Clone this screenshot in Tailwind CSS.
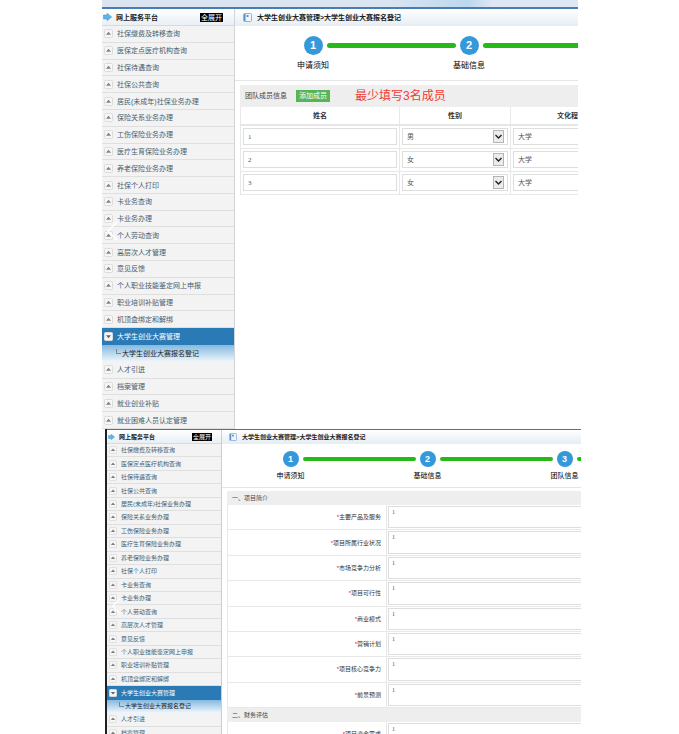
<!DOCTYPE html>
<html lang="zh-CN">
<head>
    <meta charset="UTF-8">
    <meta name="viewport" content="width=device-width, initial-scale=1.0">
    <title>网上服务平台</title>
    <script src="https://cdn.jsdelivr.net/npm/@tailwindcss/browser@4"></script>
</head>
<body class="bg-white h-screen overflow-hidden font-['Liberation_Sans','Noto_Sans_CJK_SC',sans-serif] text-[#333]">

    <!-- Team members -->
    <section class="ml-[102px] mr-[101px] overflow-hidden">
        <div class="h-[7px] bg-linear-to-r from-[#dbe5f2] from-60% via-[#bcd8ee] via-77% to-[#dfe6f4] to-82%"></div>
        <div class="flex border-t-2 border-[#4a7db3]">
            <aside class="relative w-[133px] shrink-0 border-r border-[#d0d5d9] bg-[#f3f3f3]">
                <header class="flex items-center h-[17px] pl-px pr-[11px] bg-linear-to-b from-white to-[#e9eff4] border-b border-[#d5dbe0]">
                    <svg class="w-[9px] h-[8px] mr-1" viewBox="0 0 9 8"><path d="M0.5 2H4V0.3L8.7 4L4 7.700V6H0.500Z" fill="#5bb5e6" stroke="#3c93cc" stroke-width=".5"/></svg>
                    <h2 class="text-[7px] leading-none font-bold text-[#222]">网上服务平台</h2>
                    <button type="button" class="ml-auto h-[9px] px-px bg-black text-white text-[7px] leading-[9px]">全展开</button>
                </header>
                <nav id="menuTeam" class="grid auto-rows-fr min-h-[403px]"></nav>
                <svg class="absolute left-[4px] top-[212px] w-[12px] h-[20px]" viewBox="0 0 12 20" fill="none" stroke="#fff" stroke-width="1.6"><path d="M11 1L2 10L11 19"/></svg>
            </aside>

            <main class="flex-1 min-w-0">
                <header class="flex items-center h-[17px] pl-[8px] bg-linear-to-b from-white to-[#e6edf3]">
                    <svg class="w-[9px] h-[9px] mr-[5px]" viewBox="0 0 9 9"><rect x=".5" y=".5" width="8" height="8" rx="1" fill="#eef5fc" stroke="#8fb3da"/><path d="M1 1H2.500V8H1ZM3.500 2H5.500V4H3.500Z" fill="#5b90cc"/></svg>
                    <h1 class="text-[7px] leading-none font-bold text-[#222] whitespace-nowrap">大学生创业大赛管理&gt;大学生创业大赛报名登记</h1>
                </header>
                <ol class="flex h-[55px] pt-[10px] overflow-hidden border-b border-[#e5e5e5]">
                    <li class="w-[156px] shrink-0">
                        <div class="flex items-center gap-1">
                            <i class="flex-1 h-[5px]"></i>
                            <span class="size-[19px] rounded-full bg-[#3498db] text-white text-[11px] leading-[19px] font-bold text-center">1</span>
                            <i class="flex-1 h-[5px] rounded-l-full bg-[#27b918]"></i>
                        </div>
                        <p class="mt-[6px] text-[8px] leading-[10px] text-center text-black">申请须知</p>
                    </li>
                    <li class="w-[156px] shrink-0">
                        <div class="flex items-center gap-1">
                            <i class="flex-1 h-[5px] rounded-r-full bg-[#27b918]"></i>
                            <span class="size-[19px] rounded-full bg-[#3498db] text-white text-[11px] leading-[19px] font-bold text-center">2</span>
                            <i class="flex-1 h-[5px] rounded-l-full bg-[#27b918]"></i>
                        </div>
                        <p class="mt-[6px] text-[8px] leading-[10px] text-center text-black">基础信息</p>
                    </li>
                    <li class="flex-1 h-[19px] flex items-center">
                        <i class="flex-1 h-[5px] bg-[#27b918]"></i>
                    </li>
                </ol>

                <div class="ml-[5px] mt-1 overflow-hidden">
                    <div class="flex items-center h-[22px] pl-[5px] bg-[#eee]">
                        <h3 class="text-[7px] text-[#444]">团队成员信息</h3>
                        <button type="button" class="ml-[9px] h-[12px] px-[3px] bg-[#56b558] text-white text-[7px] leading-[12px]">添加成员</button>
                        <p class="ml-[25px] text-[12px] leading-none text-[#f23a30]">最少填写3名成员</p>
                    </div>
                    <table class="w-[392px] table-fixed border-collapse text-[7px] leading-none">
                        <thead>
                            <tr class="h-[18px] border-b-2 border-[#e6e6e6]">
                                <th class="w-[159px] border-x border-[#e8e8e8]">姓名</th>
                                <th class="w-[111px] border-x border-[#e8e8e8]">性别</th>
                                <th class="border-x border-[#e8e8e8]">文化程度</th>
                            </tr>
                        </thead>
                        <tbody id="members"></tbody>
                    </table>
                </div>
            </main>
        </div>
    </section>

    <!-- Project form -->
    <section class="ml-[105px] mr-[98px] border-l-2 border-[#1d2126] overflow-hidden">
        <div class="flex border-t border-t-[#3f76ad]">
            <aside class="relative w-[115px] shrink-0 border-r border-[#c9ced3] bg-[#f3f3f3]">
                <header class="flex items-center h-[14px] pl-px pr-[9px] bg-linear-to-b from-white to-[#e9eff4] border-b border-[#d5dbe0]">
                    <svg class="w-[7px] h-[6px] mr-1" viewBox="0 0 9 8"><path d="M0.5 2H4V0.3L8.7 4L4 7.700V6H0.500Z" fill="#5bb5e6" stroke="#3c93cc" stroke-width=".5"/></svg>
                    <h2 class="text-[6px] leading-none font-bold text-[#222]">网上服务平台</h2>
                    <button type="button" class="ml-auto h-[8px] px-px bg-black text-white text-[6px] leading-[8px]">全展开</button>
                </header>
                <nav id="menuProject" class="grid auto-rows-fr min-h-[296px]"></nav>
                <svg class="absolute left-[4px] top-[167px] w-[10px] h-[18px]" viewBox="0 0 12 20" fill="none" stroke="#fff" stroke-width="1.6"><path d="M11 1L2 10L11 19"/></svg>
            </aside>

            <main class="flex-1 min-w-0">
                <header class="flex items-center h-[14px] pl-[7px] bg-linear-to-b from-white to-[#e6edf3]">
                    <svg class="w-[8px] h-[8px] mr-[5px]" viewBox="0 0 9 9"><rect x=".5" y=".5" width="8" height="8" rx="1" fill="#eef5fc" stroke="#8fb3da"/><path d="M1 1H2.500V8H1ZM3.500 2H5.500V4H3.500Z" fill="#5b90cc"/></svg>
                    <h1 class="text-[6px] leading-none font-bold text-[#222] whitespace-nowrap">大学生创业大赛管理&gt;大学生创业大赛报名登记</h1>
                </header>
                <ol class="flex h-[44px] pt-[7px] overflow-hidden border-b border-[#e5e5e5]">
                    <li class="w-[137px] shrink-0">
                        <div class="flex items-center gap-1">
                            <i class="flex-1 h-[4px]"></i>
                            <span class="size-[16px] rounded-full bg-[#3498db] text-white text-[9px] leading-[16px] font-bold text-center">1</span>
                            <i class="flex-1 h-[4px] rounded-l-full bg-[#27b918]"></i>
                        </div>
                        <p class="mt-[4px] text-[7px] leading-[9px] text-center text-black">申请须知</p>
                    </li>
                    <li class="w-[137px] shrink-0">
                        <div class="flex items-center gap-1">
                            <i class="flex-1 h-[4px] rounded-r-full bg-[#27b918]"></i>
                            <span class="size-[16px] rounded-full bg-[#3498db] text-white text-[9px] leading-[16px] font-bold text-center">2</span>
                            <i class="flex-1 h-[4px] rounded-l-full bg-[#27b918]"></i>
                        </div>
                        <p class="mt-[4px] text-[7px] leading-[9px] text-center text-black">基础信息</p>
                    </li>
                    <li class="w-[137px] shrink-0">
                        <div class="flex items-center gap-1">
                            <i class="flex-1 h-[4px] rounded-r-full bg-[#27b918]"></i>
                            <span class="size-[16px] rounded-full bg-[#3498db] text-white text-[9px] leading-[16px] font-bold text-center">3</span>
                            <i class="flex-1 h-[4px] rounded-l-full bg-[#27b918]"></i>
                        </div>
                        <p class="mt-[4px] text-[7px] leading-[9px] text-center text-black">团队信息</p>
                    </li>
                </ol>

                <form class="ml-[5px] mt-[3px]">
                    <h3 class="h-[14px] pl-[5px] bg-[#eee] text-[6px] leading-[14px] text-[#444]">一、项目简介</h3>
                    <div id="intro" class="grid auto-rows-fr min-h-[203px]"></div>
                    <h3 class="h-[14px] pl-[5px] bg-[#eee] text-[6px] leading-[14px] text-[#444]">二、财务评估</h3>
                    <div id="finance" class="grid auto-rows-[25px]"></div>
                </form>
            </main>
        </div>
    </section>

    <script>
        const active = '大学生创业大赛管理';
        const child = '大学生创业大赛报名登记';
        const menu = [
            '社保缴费及转移查询', '医保定点医疗机构查询', '社保待遇查询', '社保公共查询',
            '居民(未成年)社保业务办理', '保险关系业务办理', '工伤保险业务办理', '医疗生育保险业务办理',
            '养老保险业务办理', '社保个人打印', '卡业务查询', '卡业务办理', '个人劳动查询',
            '高层次人才管理', '意见反馈', '个人职业技能鉴定网上申报', '职业培训补贴管理',
            '机顶盒绑定和解绑', active, child, '人才引进', '档案管理', '就业创业补贴', '就业困难人员认定管理'
        ];

        const up = '<path d="M2 5.700L4.500 2.800L7 5.700Z" fill="#808080"/>';
        const down = '<path d="M2 3.300L4.500 6.200L7 3.300Z" fill="#666"/>';
        const toggle = (shape, size) => `<svg class="${size} shrink-0" viewBox="0 0 9 9"><rect x=".5" y=".5" width="8" height="8" rx="1" fill="#f6f6f6" stroke="#dcdcdc"/>${shape}</svg>`;

        function renderMenu(id, items, text, icon, indent) {
            document.getElementById(id).innerHTML = items.map(name => {
                if (name === child) {
                    return `<a href="#" class="flex items-center ${indent} ${text} bg-linear-to-b from-[#83b9df] to-[#f1f7fb] leading-none text-[#222] whitespace-nowrap"><svg class="w-[5px] h-[8px] mr-px" viewBox="0 0 5 8" fill="none" stroke="#567"><path d="M.5 0V4.500H5" stroke-width=".7"/></svg>${name}</a>`;
                }
                if (name === active) {
                    return `<a href="#" class="flex items-center gap-1 pl-[2px] ${text} bg-[#2a7ab6] leading-none text-white whitespace-nowrap">${toggle(down, icon)}${name}</a>`;
                }
                return `<a href="#" class="flex items-center gap-1 pl-[2px] ${text} border-b border-[#dfdfdf] leading-none text-[#46606f] whitespace-nowrap">${toggle(up, icon)}${name}</a>`;
            }).join('');
        }
        renderMenu('menuTeam', menu, 'text-[7px]', 'size-[9px]', 'pl-[14px]');
        renderMenu('menuProject', menu.slice(0, 22), 'text-[6px]', 'size-[8px]', 'pl-[12px]');

        document.getElementById('members').innerHTML = ['男', '女', '女'].map((sex, i) => `
            <tr class="h-[23px] border-b border-[#e8e8e8]">
                <td class="border-x border-[#e8e8e8] px-[2px]">
                    <input type="text" aria-label="姓名" value="${i + 1}" class="block w-full h-[17px] border border-[#dedede] px-[4px] font-['Liberation_Serif','Noto_Sans_CJK_SC',serif] text-[7px] text-[#555]">
                </td>
                <td class="border-x border-[#e8e8e8] px-[2px]">
                    <div class="relative">
                        <select aria-label="性别" class="block appearance-none w-full h-[17px] border border-[#dedede] px-[4px] text-[7px] text-[#555]">
                            <option ${sex === '男' ? 'selected' : ''}>男</option>
                            <option ${sex === '女' ? 'selected' : ''}>女</option>
                        </select>
                        <svg class="absolute right-[4px] top-[2px] w-[11px] h-[13px] pointer-events-none" viewBox="0 0 11 13"><rect x=".5" y=".5" width="10" height="12" fill="#ececec" stroke="#b5b5b5"/><path d="M2.500 5L5.500 8L8.500 5" fill="none" stroke="#222" stroke-width="1.4"/></svg>
                    </div>
                </td>
                <td class="border-x border-[#e8e8e8] px-[2px]">
                    <select aria-label="文化程度" class="block appearance-none w-full h-[17px] border border-[#dedede] px-[4px] text-[7px] text-[#555]">
                        <option>大学</option>
                    </select>
                </td>
            </tr>`).join('');

        function renderFields(id, labels) {
            document.getElementById(id).innerHTML = labels.map((label, i) => `
                <div class="flex border-b border-[#e8e8e8]">
                    <label for="${id}${i}" class="flex items-center justify-end w-[160px] pr-[5px] border-x border-[#e8e8e8] text-[6px] leading-none"><span class="text-[#f00]">*</span>${label}</label>
                    <textarea id="${id}${i}" class="block flex-1 min-w-0 ml-px my-px px-[3px] py-[2px] border border-r-0 border-[#dedede] resize-none overflow-hidden font-['Liberation_Serif',serif] text-[6px] leading-none text-[#555]">1</textarea>
                </div>`).join('');
        }
        renderFields('intro', ['主要产品及服务', '项目所属行业状况', '市场竞争力分析', '项目可行性', '商业模式', '营销计划', '项目核心竞争力', '前景预测']);
        renderFields('finance', ['项目资金需求']);
    </script>

</body>
</html>
